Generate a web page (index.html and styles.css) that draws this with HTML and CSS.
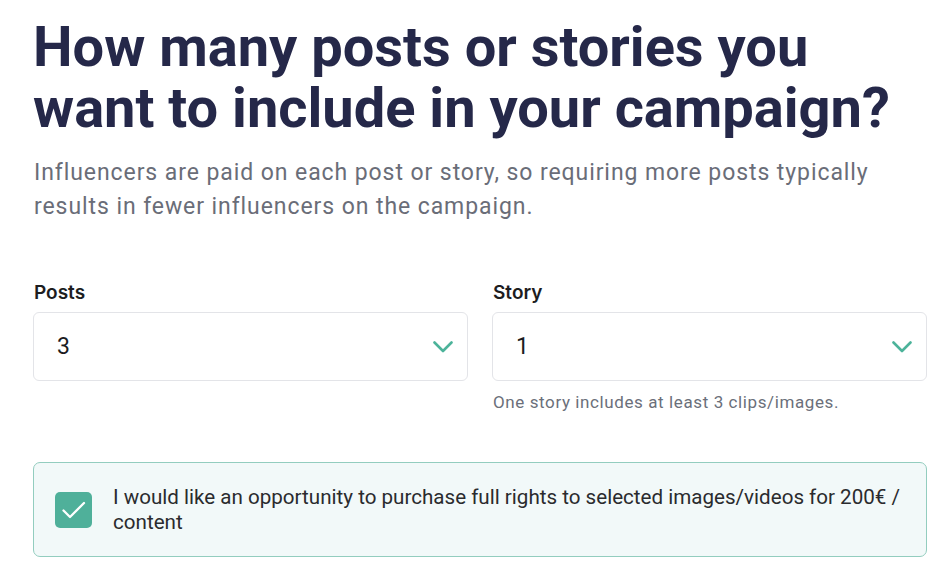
FILE: index.html
```html
<!DOCTYPE html>
<html>
<head>
<meta charset="utf-8">
<link rel="stylesheet" href="styles.css">
</head>
<body>
<main class="page">
  <h1 class="title">How many posts or stories you want to include in your campaign?</h1>
  <p class="lead">Influencers are paid on each post or story, so requiring more posts typically results in fewer influencers on the campaign.</p>
  <div class="fields">
    <div class="field">
      <label class="label">Posts</label>
      <div class="select">
        <span class="value">3</span>
        <svg class="chev" width="20" height="12" viewBox="0 0 20 12"><path d="M1.5 1.5 L10 10 L18.5 1.5" fill="none" stroke="#4cb39a" stroke-width="2.6" stroke-linecap="round" stroke-linejoin="round"/></svg>
      </div>
    </div>
    <div class="field">
      <label class="label">Story</label>
      <div class="select">
        <span class="value">1</span>
        <svg class="chev" width="20" height="12" viewBox="0 0 20 12"><path d="M1.5 1.5 L10 10 L18.5 1.5" fill="none" stroke="#4cb39a" stroke-width="2.6" stroke-linecap="round" stroke-linejoin="round"/></svg>
      </div>
      <p class="help">One story includes at least 3 clips/images.</p>
    </div>
  </div>
  <div class="option">
    <span class="check">
      <svg width="37" height="36" viewBox="0 0 37 36"><path d="M8.5 18.5 L15 25 L29 11" fill="none" stroke="#fff" stroke-width="2.3" stroke-linecap="round" stroke-linejoin="round"/></svg>
    </span>
    <span class="option-text">I would like an opportunity to purchase full rights to selected images/videos for 200€ / content</span>
  </div>
</main>
</body>
</html>
```
FILE: styles.css
```css
html, body {
  margin: 0;
  padding: 0;
  background: #ffffff;
}
body {
  font-family: Roboto, "Liberation Sans", sans-serif;
}
.page {
  width: 894px;
  padding: 17px 0 0 33px;
}
.title {
  margin: 0;
  font-family: Roboto, sans-serif;
  font-weight: 700;
  font-size: 56px;
  line-height: 61px;
  color: #252849;
}
.lead {
  margin: 17px 0 0 1px;
  font-size: 23px;
  line-height: 34px;
  letter-spacing: 0.92px;
  color: #6a6d78;
}
.fields {
  display: grid;
  grid-template-columns: 1fr 1fr;
  column-gap: 24px;
  margin-top: 57px;
}
.field {
  display: flex;
  flex-direction: column;
}
.label {
  font-family: Inter, Roboto, sans-serif;
  font-weight: 600;
  font-size: 19px;
  line-height: 24px;
  color: #1d1d1f;
  margin-bottom: 7px;
  padding-left: 1px;
}
.select {
  height: 67px;
  border: 1px solid #e3e4e8;
  border-radius: 6px;
  display: flex;
  align-items: center;
  justify-content: space-between;
  padding: 0 14px 0 23px;
}
.value {
  font-size: 23px;
  color: #1c1c1e;
}
.chev {
  display: block;
}
.help {
  margin: 11px 0 0 1px;
  font-size: 17px;
  line-height: 20px;
  letter-spacing: 0.6px;
  color: #6b6f7a;
}
.option {
  margin-top: 50px;
  display: flex;
  align-items: center;
  gap: 21px;
  height: 95px;
  box-sizing: border-box;
  padding: 0 20px 0 21px;
  background: #f2f9f9;
  border: 1px solid #93cdbf;
  border-radius: 7px;
}
.check {
  flex: 0 0 auto;
  width: 37px;
  height: 36px;
  border-radius: 5px;
  background: #4fb09a;
  display: block;
}
.check svg {
  display: block;
}
.option-text {
  font-size: 20.6px;
  line-height: 25px;
  color: #2a2b2e;
}
```
